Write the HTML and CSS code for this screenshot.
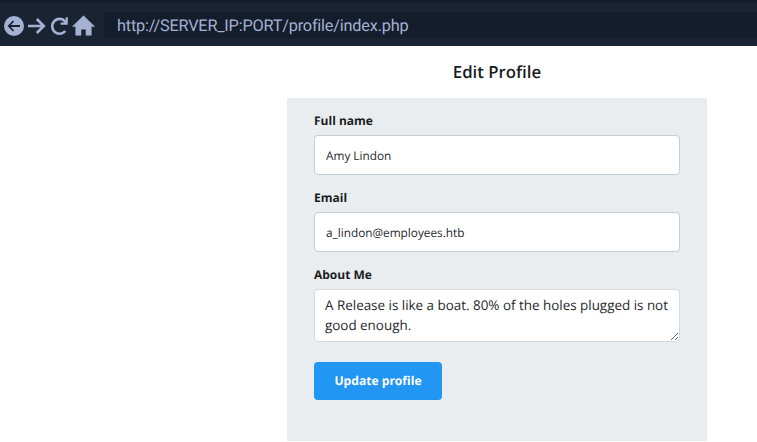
FILE: index.html
```html
<!DOCTYPE html>
<html lang="en">
<head>
<meta charset="utf-8">
<title>Edit Profile</title>
<link rel="stylesheet" href="styles.css">
</head>
<body>
<header class="browser-bar">
  <nav class="controls">
    <svg width="100" height="28" viewBox="0 0 100 28" aria-hidden="true">
      <circle cx="14" cy="14" r="10" fill="#a4b1d2"/>
      <path d="M20 14H9.500M13.500 9L8.800 14l4.700 5" fill="none" stroke="#1a2332" stroke-width="1.800"/>
      <path d="M28 14h15.500M36.800 7L43.800 14l-7 7" fill="none" stroke="#a4b1d2" stroke-width="2.600"/>
      <path d="M65.200 9.500A7.400 7.400 0 1 0 65.300 19" fill="none" stroke="#a4b1d2" stroke-width="2.600"/>
      <path d="M67.800 5.200v7.600h-7.200v-2.400h2.800l2.200-2V5.200z" fill="#a4b1d2"/>
      <path d="M83.500 3.800L94.600 14.400H91.300V23.200H86V17.200H81V23.200H75.700V14.400H72.400z" fill="#a4b1d2" stroke="#a4b1d2" stroke-width=".5" stroke-linejoin="round"/>
    </svg>
  </nav>
  <div class="address"><span class="url">http://SERVER_IP:PORT/profile/index.php</span></div>
</header>
<main class="profile">
  <h1>Edit Profile</h1>
  <form class="panel">
    <label for="name">Full name</label>
    <input class="name" id="name" type="text" value="Amy Lindon">
    <label for="email">Email</label>
    <input class="email" id="email" type="text" value="a_lindon@employees.htb">
    <label for="about">About Me</label>
    <textarea id="about">A Release is like a boat. 80% of the holes plugged is not good enough.</textarea>
    <button type="button">Update profile</button>
  </form>
</main>
</body>
</html>
```
FILE: styles.css
```css
* { box-sizing: border-box; }
body {
  margin: 0;
  height: 442px;
  overflow: hidden;
  background: #fff;
  color: #191c20;
  font-family: "Open Sans", sans-serif;
  text-rendering: geometricPrecision;
}
.browser-bar {
  display: flex;
  height: 46px;
  padding-top: 9px;
  background: #1a2332;
  border-top: 3px solid #141d2b;
}
.controls { width: 104px; height: 28px; }
.controls svg { display: block; }
.address {
  flex: 1;
  height: 26px;
  padding-left: 13px;
  border-radius: 4px 0 0 4px;
  background: #141d2b;
  color: #a4b1d2;
  font: 16.3px/28px Roboto, "Liberation Sans", sans-serif;
  letter-spacing: -0.2px;
  white-space: nowrap;
}
.profile { width: 420px; margin-left: 287px; }
h1 {
  height: 52px;
  margin: 0;
  font-size: 16.8px;
  font-weight: 600;
  line-height: 52px;
  text-align: center;
}
.panel {
  height: 343px;
  padding: 12px 27px 0;
  background: #e9edf0;
}
label {
  display: block;
  height: 25px;
  font-size: 12px;
  font-weight: 700;
  line-height: 21px;
}
input, textarea {
  display: block;
  width: 366px;
  border: 1px solid #c3ced3;
  border-radius: 4px;
  outline: 0;
  background: #fff;
  color: #25292d;
  font-family: inherit;
  text-rendering: inherit;
}
input {
  height: 40px;
  margin-bottom: 12px;
  padding: 1px 11px 0;
  font-size: 11.8px;
}
textarea {
  height: 53px;
  padding: 5px 6px 5px 10px;
  border-color: #d4dade;
  font-size: 13.42px;
  line-height: 20px;
  overflow: hidden;
}
button {
  display: block;
  width: 128px;
  height: 38px;
  margin-top: 20px;
  padding: 0;
  border: 0;
  border-radius: 4px;
  background: #2196f3;
  color: #fff;
  font: 700 12.1px/38px "Open Sans", sans-serif;
  text-rendering: inherit;
}
```
